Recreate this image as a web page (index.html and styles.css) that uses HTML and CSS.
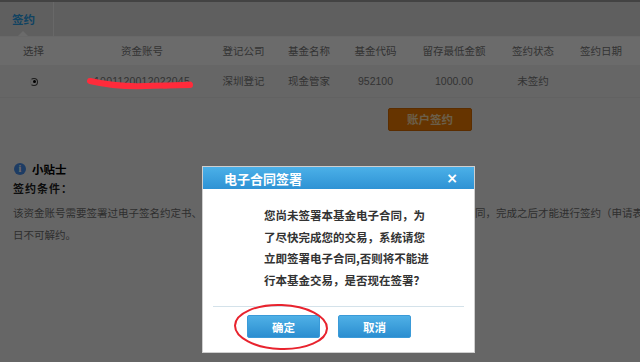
FILE: index.html
```html
<!DOCTYPE html>
<html lang="zh-CN">
<head>
  <meta charset="UTF-8">
  <title>签约</title>
  <link rel="stylesheet" href="styles.css">
</head>
<body>

<div class="page">
  <div class="top-line"></div>
  <div class="tab-bar">
    <div class="tab active">签约</div>
  </div>

  <table class="sign-table">
    <thead>
      <tr>
        <th class="c1">选择</th>
        <th class="c2">资金账号</th>
        <th class="c3">登记公司</th>
        <th class="c4">基金名称</th>
        <th class="c5">基金代码</th>
        <th class="c6">留存最低金额</th>
        <th class="c7">签约状态</th>
        <th class="c8">签约日期</th>
      </tr>
    </thead>
    <tbody>
      <tr>
        <td><span class="radio"></span></td>
        <td class="account">1001120012022045</td>
        <td>深圳登记</td>
        <td>现金管家</td>
        <td>952100</td>
        <td>1000.00</td>
        <td>未签约</td>
        <td></td>
      </tr>
    </tbody>
  </table>

  <div class="actions">
    <a href="javascript:;" class="btn-sign">账户签约</a>
  </div>

  <div class="tips">
    <div class="tips-title"><span class="info-icon">i</span>小贴士</div>
    <div class="tips-sub">签约条件：</div>
    <p class="tips-text">该资金账号需要签署过电子签名约定书、风险承受能力评估问卷、开放式基金开户协议及基金电子合同，完成之后才能进行签约（申请表</p>
    <p class="tips-text">日不可解约。</p>
  </div>
</div>

<div class="mask"></div>

<div class="dialog">
  <div class="dialog-title">
    <span>电子合同签署</span>
    <span class="dialog-close">×</span>
  </div>
  <div class="dialog-body">
    <p class="dialog-msg">您尚未签署本基金电子合同，为<br>了尽快完成您的交易，系统请您<br>立即签署电子合同,否则将不能进<br>行本基金交易，是否现在签署？</p>
  </div>
  <div class="dialog-foot">
    <a href="javascript:;" class="dialog-btn">确定</a>
    <a href="javascript:;" class="dialog-btn">取消</a>
  </div>
</div>

<!-- 截图上的红色标注 -->
<svg class="mark-scribble" width="120" height="16" viewBox="0 0 120 16">
  <path d="M4 5 Q 30 11 60 10 T 104 9" fill="none" stroke="#ff2b3b" stroke-width="6" stroke-linecap="round"/>
  <path d="M78 10 L 104 8" fill="none" stroke="#ff2b3b" stroke-width="5" stroke-linecap="round"/>
</svg>
<svg class="mark-circle" width="100" height="50" viewBox="0 0 100 50">
  <ellipse cx="50" cy="25" rx="46" ry="22" fill="none" stroke="#e8232e" stroke-width="2" transform="rotate(2 50 25)"/>
</svg>

</body>
</html>
```

FILE: styles.css
```css
* {
  box-sizing: border-box;
}

html, body {
  margin: 0;
  padding: 0;
  overflow: hidden;
}

body {
  width: 640px;
  height: 362px;
  background: #f3f3f3;
  font-family: "Liberation Sans", "Noto Sans CJK SC", sans-serif;
  font-size: 10.5px;
  color: #7a7a7a;
}

.page {
  width: 640px;
}

.top-line {
  height: 2px;
  background: #a0a0a0;
}

.tab-bar {
  height: 34px;
  background: #e3e3e3;
  display: flex;
}

.tab {
  width: 54px;
  border-right: 1px solid #f8f8f8;
  display: flex;
  align-items: center;
  justify-content: center;
  font-size: 11.5px;
  font-weight: bold;
  color: #2a9fe8;
  position: relative;
  padding-right: 6px;
}

.tab.active::after {
  content: "";
  position: absolute;
  left: 18px;
  bottom: 0;
  border-left: 5px solid transparent;
  border-right: 5px solid transparent;
  border-bottom: 5px solid #ffffff;
}

.sign-table {
  width: 640px;
  border-collapse: collapse;
  table-layout: fixed;
}

.sign-table th {
  height: 28px;
  background: #ffffff;
  font-weight: normal;
  text-align: center;
  padding: 0;
  border-top: 1px solid #f8f8f8;
}

.sign-table td {
  height: 33px;
  text-align: center;
  padding: 0;
  border-bottom: 1px solid #eaeaea;
}

.c1 { width: 68px; }
.c2 { width: 148px; }
.c3 { width: 55px; }
.c4 { width: 76px; }
.c5 { width: 57px; }
.c6 { width: 100px; }
.c7 { width: 58px; }
.c8 { width: 78px; }

.sign-table .c1 {
  padding-right: 1px;
}

.radio {
  display: inline-block;
  width: 8px;
  height: 8px;
  border: 1px solid #444;
  border-left-color: #ddd;
  border-radius: 50%;
  position: relative;
  vertical-align: middle;
}

.radio::after {
  content: "";
  position: absolute;
  left: 1.5px;
  top: 1.5px;
  width: 3px;
  height: 3px;
  border-radius: 50%;
  background: #000;
}

.account {
  letter-spacing: 0.2px;
}

.actions {
  display: flex;
  justify-content: flex-end;
  padding: 10px 168px 0 0;
}

.btn-sign {
  width: 84px;
  height: 23px;
  line-height: 23px;
  text-align: center;
  border-radius: 2px;
  background: #f37c00;
  color: #ffe0b0;
  font-size: 11.5px;
  font-weight: bold;
  text-decoration: none;
  border: 1px solid #d96c00;
}

.tips {
  padding: 28px 0 0 13px;
}

.tips-title {
  height: 20px;
  display: flex;
  align-items: center;
  font-size: 11.5px;
  font-weight: bold;
  color: #000;
}

.info-icon {
  display: inline-block;
  width: 12px;
  height: 12px;
  border-radius: 50%;
  background: #478fee;
  color: #ffffff;
  font-family: "Liberation Serif", serif;
  font-size: 10px;
  font-weight: bold;
  line-height: 12px;
  text-align: center;
  margin: 0 6px 0 1px;
}

.tips-sub {
  height: 20px;
  line-height: 20px;
  font-size: 11px;
  font-weight: bold;
  color: #222;
  letter-spacing: 1px;
}

.tips-text {
  margin: 0;
  height: 22px;
  line-height: 22px;
  white-space: nowrap;
  color: #6e6e6e;
}

.tips-sub + .tips-text {
  margin-top: 3px;
}

.mask {
  position: fixed;
  left: 0;
  top: 0;
  right: 0;
  bottom: 0;
  background: rgba(0, 0, 0, 0.58);
}

.dialog {
  position: fixed;
  left: 202px;
  top: 166px;
  width: 273px;
  height: 187px;
  background: #ffffff;
  border: 1px solid #cfcfcf;
  display: flex;
  flex-direction: column;
}

.dialog-title {
  height: 22px;
  padding: 0 16px 0 21px;
  display: flex;
  align-items: center;
  justify-content: space-between;
  background: linear-gradient(#4bb0e8, #2e92d4);
  color: #ffffff;
  font-family: "Noto Sans CJK SC", sans-serif;
  font-size: 13px;
  font-weight: bold;
}

.dialog-close {
  font-family: "DejaVu Sans", sans-serif;
  font-size: 14px;
  font-weight: bold;
}

.dialog-body {
  height: 118px;
  margin: 0 10px;
  padding: 16px 0 0 51px;
  border-bottom: 1px solid #d4e2ea;
}

.dialog-msg {
  margin: 0;
  font-family: "Noto Sans CJK SC", sans-serif;
  font-size: 11.5px;
  font-weight: bold;
  line-height: 21.7px;
  color: #333;
  white-space: nowrap;
}

.dialog-foot {
  display: flex;
  gap: 18px;
  padding: 8px 0 0 44px;
}

.dialog-btn {
  width: 73px;
  height: 23px;
  line-height: 23px;
  text-align: center;
  background: linear-gradient(#4fb0e6, #2b8ed0);
  border: 1px solid #3a9ad8;
  border-radius: 2px;
  color: #ffffff;
  font-family: "Noto Sans CJK SC", sans-serif;
  font-size: 11.5px;
  font-weight: bold;
  text-decoration: none;
}

.mark-scribble {
  position: fixed;
  left: 86px;
  top: 76px;
}

.mark-circle {
  position: fixed;
  left: 231px;
  top: 302px;
}
```
